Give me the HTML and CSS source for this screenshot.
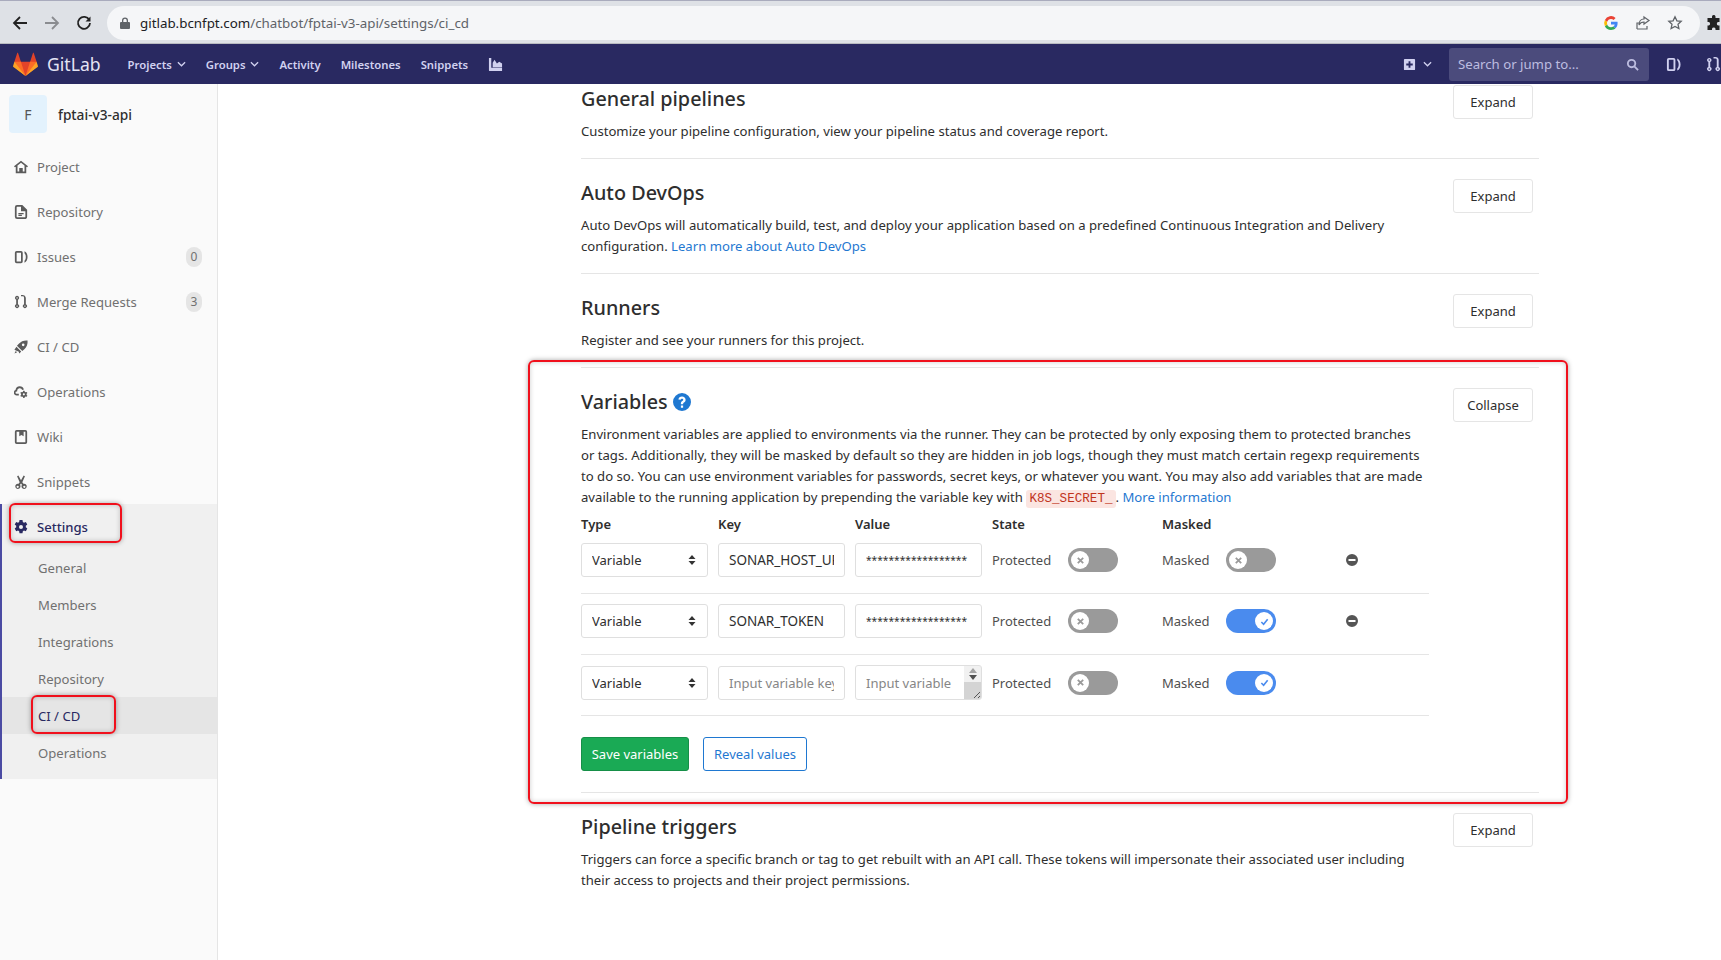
FILE: index.html
```html
<!DOCTYPE html>
<html lang="en">
<head>
    <meta charset="UTF-8">
    <title>CI / CD Settings · fptai-v3-api · GitLab</title>
    <link rel="stylesheet" href="styles.css">
</head>
<body>
    <svg class="sprite" width="0" height="0">
        <symbol id="i-home" viewBox="0 0 16 16"><path d="M8 .8 0 7.100l1 1.300 1-.8V15h12V7.600l1 .8 1-1.300zM4 13V6.200l4-3.100 4 3.100V13h-2V9H6v4z" fill-rule="evenodd"/></symbol>
        <symbol id="i-doc" viewBox="0 0 16 16"><path d="M3.500 0h6L15 5.500V13a3 3 0 0 1-3 3H3.500a2.500 2.500 0 0 1-2.500-2.500v-11A2.500 2.500 0 0 1 3.500 0zm0 2a.5.500 0 0 0-.5.500v11a.5.500 0 0 0 .5.500H12a1 1 0 0 0 1-1V7H8V2zM5 9h6v1.500H5zm0 2.200h4V12.500H5z" fill-rule="evenodd"/></symbol>
        <symbol id="i-issues" viewBox="0 0 16 16"><path d="M3 1h5a2 2 0 0 1 2 2v10a2 2 0 0 1-2 2H3a2 2 0 0 1-2-2V3a2 2 0 0 1 2-2zm0 2v10h5V3zm9-1.500c2.300 1 3.500 3.500 3.500 6.500s-1.200 5.500-3.500 6.500v-2.200c1-.9 1.500-2.400 1.500-4.300s-.5-3.400-1.500-4.300z" fill-rule="evenodd"/></symbol>
        <symbol id="i-mr" viewBox="0 0 16 16"><path d="M3.500 1a2.300 2.300 0 0 1 1 4.400v5.200a2.300 2.300 0 1 1-2 0V5.400a2.300 2.300 0 0 1 1-4.400zm0 1.500a.8.800 0 1 0 0 1.600.8.800 0 0 0 0-1.600zm0 9.400a.8.800 0 1 0 0 1.600.8.800 0 0 0 0-1.600zM8 0v1.500h2A1.500 1.500 0 0 1 11.500 3v7.600a2.300 2.300 0 1 0 2 0V3A3.500 3.500 0 0 0 10 0zm4.500 11.900a.8.800 0 1 1 0 1.600.8.800 0 0 1 0-1.600z" fill-rule="evenodd"/></symbol>
        <symbol id="i-rocket" viewBox="0 0 16 16"><path d="M15.500.5c.4 4.200-1 7.500-3.700 10l-2.300 2.100L3.400 6.500l2.100-2.300C8 1.500 11.300.1 15.500.5zM10.500 4a1.500 1.500 0 1 0 0 3 1.500 1.500 0 0 0 0-3zM2.800 7.800l5.400 5.400-2 2.300-1-2.300-2.400-1-2.300-1zM2 12.500 3.500 14 .5 15.500z" fill-rule="evenodd"/></symbol>
        <symbol id="i-ops" viewBox="0 0 16 16"><path d="M6.500 1.500a5 5 0 0 1 4.800 3.500l-1.900.6A3 3 0 0 0 3.600 6.500v1H3a1.300 1.300 0 0 0 0 2.600h2.500v2H3a3.300 3.300 0 0 1-1.300-6.300A5 5 0 0 1 6.500 1.500z"/><path d="M10.500 6.500h1.500l.3 1.200 1 .6 1.200-.4.800 1.300-.9.900v1.200l.9.900-.8 1.300-1.200-.4-1 .6-.3 1.200h-1.500l-.3-1.200-1-.6-1.200.4-.8-1.300.9-.9V10.100l-.9-.9.8-1.300 1.200.4 1-.6zm.75 3a1.200 1.200 0 1 0 0 2.400 1.200 1.200 0 0 0 0-2.400z" fill-rule="evenodd"/></symbol>
        <symbol id="i-book" viewBox="0 0 16 16"><path d="M3 0h10a2 2 0 0 1 2 2v12a2 2 0 0 1-2 2H3a2 2 0 0 1-2-2V2a2 2 0 0 1 2-2zm0 2v12h10V2h-2v5L8.500 5.800 6 7V2z" fill-rule="evenodd"/></symbol>
        <symbol id="i-scissors" viewBox="0 0 16 16"><path d="M5 .5 8 6l3-5.500 1.500 1-3 6.800 1.300 1.700a3 3 0 1 1-1.700 1.200L8 9.800l-1.100 1.400a3 3 0 1 1-1.700-1.200l1.300-1.700-3-6.800zM4.200 12.200a1.300 1.300 0 1 0 0 2.600 1.300 1.300 0 0 0 0-2.600zm7.600 0a1.300 1.300 0 1 0 0 2.600 1.300 1.300 0 0 0 0-2.600z" fill-rule="evenodd"/></symbol>
        <symbol id="i-gear" viewBox="0 0 16 16"><path d="M9.700 0l.4 2.200 1.300.8 2.100-.8 1.700 3-1.700 1.400v1.800l1.700 1.400-1.700 3-2.100-.8-1.300.8-.4 2.200H6.300l-.4-2.200-1.300-.8-2.100.8-1.700-3 1.700-1.400V6.600L.8 5.200l1.700-3 2.100.8 1.300-.8L6.300 0zM8 5.700a1.800 1.800 0 1 0 0 4.600 1.800 1.800 0 0 0 0-4.600z" fill-rule="evenodd"/></symbol>
        <symbol id="i-chart" viewBox="0 0 16 16"><path d="M1 1h2.500v10.500H15V15H2a1 1 0 0 1-1-1zm4 5 2-3 2.500 4 2.500-2 3 2v4H5z"/></symbol>
        <symbol id="i-chevron" viewBox="0 0 10 6"><path d="M1 1l4 4 4-4" fill="none" stroke="currentColor" stroke-width="1.400"/></symbol>
        <symbol id="i-minus" viewBox="0 0 14 14"><path d="M7 1a6 6 0 1 1 0 12A6 6 0 0 1 7 1zM3.500 6v2h7V6z" fill-rule="evenodd"/></symbol>
        <symbol id="i-x" viewBox="0 0 10 10"><path d="M2 2l6 6M8 2 2 8" fill="none" stroke="currentColor" stroke-width="2"/></symbol>
        <symbol id="i-check" viewBox="0 0 10 10"><path d="M1.500 5.500 4 8l4.500-5.500" fill="none" stroke="currentColor" stroke-width="1.800"/></symbol>
    </svg>

    <div class="browser-bar">
        <svg class="browser-icon" viewBox="0 0 16 16"><path d="M15 8H2M8 2 2 8l6 6" fill="none" stroke="#222" stroke-width="1.800"/></svg>
        <svg class="browser-icon" viewBox="0 0 16 16"><path d="M1 8h13M8 2l6 6-6 6" fill="none" stroke="#8a8c90" stroke-width="1.800"/></svg>
        <svg class="browser-icon" viewBox="0 0 16 16"><path d="M13.300 5A6 6 0 1 0 14 8" fill="none" stroke="#222" stroke-width="1.800"/><path d="M14.500 1.500v5h-5z" fill="#222"/></svg>
        <div class="url-pill">
            <svg class="lock" viewBox="0 0 10 12"><path d="M2 5V3.500a3 3 0 0 1 6 0V5h1a1 1 0 0 1 1 1v5a1 1 0 0 1-1 1H1a1 1 0 0 1-1-1V6a1 1 0 0 1 1-1zm1.300 0h3.400V3.500a1.700 1.700 0 0 0-3.400 0z" fill="#5f6368" fill-rule="evenodd"/></svg>
            <span class="url"><span class="url-host">gitlab.bcnfpt.com</span>/chatbot/fptai-v3-api/settings/ci_cd</span>
            <svg class="pill-icon" viewBox="0 0 16 16">
                <path d="M14.600 8.200c0-.5 0-1-.1-1.400H8v2.700h3.700a3.200 3.200 0 0 1-1.400 2.100l2.200 1.700c1.300-1.200 2.100-3 2.100-5.100z" fill="#4285f4"/>
                <path d="M8 15c1.900 0 3.500-.6 4.500-1.700l-2.200-1.700c-.6.400-1.400.7-2.300.7a4 4 0 0 1-3.800-2.800L1.900 11.200A6.800 6.800 0 0 0 8 15z" fill="#34a853"/>
                <path d="M4.200 9.500a4 4 0 0 1 0-2.700L1.900 5a6.800 6.800 0 0 0 0 6.200z" fill="#fbbc05"/>
                <path d="M8 3.900c1 0 1.900.4 2.600 1l2-2A6.800 6.800 0 0 0 1.900 5l2.300 1.800A4 4 0 0 1 8 3.900z" fill="#ea4335"/>
            </svg>
            <svg class="pill-icon" viewBox="0 0 16 16"><path d="M2 14V8h2M2 14h10v-3M9 2l5 3.500L9 9V7C6.500 7 5 8 4 10c0-3.500 2-6 5-6z" fill="none" stroke="#5f6368" stroke-width="1.200"/></svg>
            <svg class="pill-icon" viewBox="0 0 16 16"><path d="M8 1.800l1.900 4 4.300.5-3.200 3 .9 4.300L8 11.500l-3.900 2.100.9-4.300-3.200-3 4.300-.5z" fill="none" stroke="#5f6368" stroke-width="1.300"/></svg>
        </div>
        <svg class="browser-icon puzzle" viewBox="0 0 16 16"><path d="M6 1.500a1.800 1.800 0 0 1 3.500 0V3h4v4h-1.300a1.800 1.800 0 0 0 0 3.500H13.500V15h-4v-1.200a1.800 1.800 0 0 0-3.500 0V15H1.500v-4.500h1.200a1.800 1.800 0 0 0 0-3.500H1.500V3H6z" fill="#222"/></svg>
    </div>

    <nav class="navbar">
        <a class="brand">
            <svg class="tanuki" viewBox="0 0 36 36">
                <path d="M2 14l9.380 9v-9l-4-12.280c-.205-.632-1.176-.632-1.380 0z" fill="#e24329"/>
                <path d="M34 14l-9.380 9v-9l4-12.280c.205-.632 1.176-.632 1.380 0z" fill="#e24329"/>
                <path d="M18 34.380 3 14h30z" fill="#e24329"/>
                <path d="M18 34.380 11.380 14H2l4 11z" fill="#fc6d26"/>
                <path d="M18 34.380 24.620 14H34l-4 11z" fill="#fc6d26"/>
                <path d="M2 14 .1 20.160c-.18.565 0 1.200.5 1.560l17.420 12.660z" fill="#fca326"/>
                <path d="M34 14l1.900 6.160c.18.565 0 1.200-.5 1.560L18 34.380z" fill="#fca326"/>
            </svg>
            <span class="brand-name">GitLab</span>
        </a>
        <a class="nav-link">Projects <svg class="chevron"><use href="#i-chevron"/></svg></a>
        <a class="nav-link">Groups <svg class="chevron"><use href="#i-chevron"/></svg></a>
        <a class="nav-link">Activity</a>
        <a class="nav-link">Milestones</a>
        <a class="nav-link">Snippets</a>
        <svg class="nav-icon"><use href="#i-chart"/></svg>
        <div class="nav-right">
            <div class="new-menu">
                <svg class="nav-plus" viewBox="0 0 14 14"><path d="M2 1h10a1 1 0 0 1 1 1v10a1 1 0 0 1-1 1H2a1 1 0 0 1-1-1V2a1 1 0 0 1 1-1zm4 2.500V6H3.500v2H6v2.500h2V8h2.500V6H8V3.500z" fill="currentColor" fill-rule="evenodd"/></svg>
                <svg class="chevron"><use href="#i-chevron"/></svg>
            </div>
            <div class="search">
                <span>Search or jump to...</span>
                <svg viewBox="0 0 14 14"><circle cx="6" cy="6" r="4" fill="none" stroke="currentColor" stroke-width="2"/><path d="M9 9l4 4" stroke="currentColor" stroke-width="2"/></svg>
            </div>
            <svg class="nav-icon"><use href="#i-issues"/></svg>
            <svg class="nav-icon"><use href="#i-mr"/></svg>
        </div>
    </nav>

    <div class="layout">
        <aside class="sidebar">
            <div class="project-head">
                <div class="avatar">F</div>
                <span class="project-name">fptai-v3-api</span>
            </div>
            <a class="side-item"><svg><use href="#i-home"/></svg>Project</a>
            <a class="side-item"><svg><use href="#i-doc"/></svg>Repository</a>
            <a class="side-item"><svg><use href="#i-issues"/></svg>Issues<span class="badge">0</span></a>
            <a class="side-item"><svg><use href="#i-mr"/></svg>Merge Requests<span class="badge">3</span></a>
            <a class="side-item"><svg><use href="#i-rocket"/></svg>CI / CD</a>
            <a class="side-item"><svg><use href="#i-ops"/></svg>Operations</a>
            <a class="side-item"><svg><use href="#i-book"/></svg>Wiki</a>
            <a class="side-item"><svg><use href="#i-scissors"/></svg>Snippets</a>
            <div class="side-active">
                <a class="side-item current"><svg><use href="#i-gear"/></svg>Settings<span class="callout callout-settings"></span></a>
                <a class="sub-item">General</a>
                <a class="sub-item">Members</a>
                <a class="sub-item">Integrations</a>
                <a class="sub-item">Repository</a>
                <a class="sub-item current">CI / CD<span class="callout callout-cicd"></span></a>
                <a class="sub-item">Operations</a>
            </div>
        </aside>

        <main class="content">
            <section class="block first">
                <div class="block-text">
                    <h2>General pipelines</h2>
                    <p>Customize your pipeline configuration, view your pipeline status and coverage report.</p>
                </div>
                <button class="btn">Expand</button>
            </section>

            <section class="block">
                <div class="block-text">
                    <h2>Auto DevOps</h2>
                    <p>Auto DevOps will automatically build, test, and deploy your application based on a predefined Continuous Integration and Delivery configuration. <a class="link">Learn more about Auto DevOps</a></p>
                </div>
                <button class="btn">Expand</button>
            </section>

            <section class="block">
                <div class="block-text">
                    <h2>Runners</h2>
                    <p>Register and see your runners for this project.</p>
                </div>
                <button class="btn">Expand</button>
            </section>

            <section class="block variables">
                <span class="callout callout-main"></span>
                <div class="block-text">
                    <h2>Variables
                        <svg class="help" viewBox="0 0 16 16"><path d="M8 0a8 8 0 1 1 0 16A8 8 0 0 1 8 0zM7 11v2h2v-2zM8 3C6.200 3 5 4 4.800 5.700l2 .3C6.900 5.300 7.300 5 8 5s1.100.4 1.100.9c0 .5-.3.8-.9 1.200C7.400 7.700 7 8.300 7 9.500V10h2v-.3c0-.6.200-.9.800-1.300.9-.6 1.400-1.300 1.400-2.500C11.200 4.200 9.900 3 8 3z" fill="#1f78d1" fill-rule="evenodd"/></svg>
                    </h2>
                    <p>Environment variables are applied to environments via the runner. They can be protected by only exposing them to protected branches<br>or tags. Additionally, they will be masked by default so they are hidden in job logs, though they must match certain regexp requirements<br>to do so. You can use environment variables for passwords, secret keys, or whatever you want. You may also add variables that are made<br>available to the running application by prepending the variable key with <code>K8S_SECRET_</code>. <a class="link">More information</a></p>
                </div>
                <button class="btn">Collapse</button>

                <div class="var-list">
                    <div class="var-head">
                        <span>Type</span><span>Key</span><span>Value</span><span>State</span><span>Masked</span>
                    </div>

                    <div class="var-row">
                        <select class="field"><option>Variable</option></select>
                        <input class="field text" value="SONAR_HOST_URL">
                        <input class="field secret" value="******************">
                        <div class="toggle-cell"><span class="toggle-label state">Protected</span><span class="toggle"><i><svg><use href="#i-x"/></svg></i></span></div>
                        <div class="toggle-cell"><span class="toggle-label">Masked</span><span class="toggle"><i><svg><use href="#i-x"/></svg></i></span></div>
                        <svg class="remove"><use href="#i-minus"/></svg>
                    </div>

                    <div class="var-row">
                        <select class="field"><option>Variable</option></select>
                        <input class="field text" value="SONAR_TOKEN">
                        <input class="field secret" value="******************">
                        <div class="toggle-cell"><span class="toggle-label state">Protected</span><span class="toggle"><i><svg><use href="#i-x"/></svg></i></span></div>
                        <div class="toggle-cell"><span class="toggle-label">Masked</span><span class="toggle on"><i><svg><use href="#i-check"/></svg></i></span></div>
                        <svg class="remove"><use href="#i-minus"/></svg>
                    </div>

                    <div class="var-row">
                        <select class="field"><option>Variable</option></select>
                        <input class="field text" placeholder="Input variable key">
                        <div class="fake-textarea">
                            <span>Input variable</span>
                            <div class="fake-scroll">
                                <div class="fake-arrows"><b class="up"></b><b class="down"></b></div>
                                <div class="fake-grip"><svg viewBox="0 0 10 10"><path d="M9 3 3 9M9 7 7 9" stroke="#555" fill="none"/></svg></div>
                            </div>
                        </div>
                        <div class="toggle-cell"><span class="toggle-label state">Protected</span><span class="toggle"><i><svg><use href="#i-x"/></svg></i></span></div>
                        <div class="toggle-cell"><span class="toggle-label">Masked</span><span class="toggle on"><i><svg><use href="#i-check"/></svg></i></span></div>
                    </div>
                </div>

                <div class="var-actions">
                    <button class="btn-save">Save variables</button>
                    <button class="btn-reveal">Reveal values</button>
                </div>
            </section>

            <section class="block">
                <div class="block-text">
                    <h2>Pipeline triggers</h2>
                    <p>Triggers can force a specific branch or tag to get rebuilt with an API call. These tokens will impersonate their associated user including their access to projects and their project permissions.</p>
                </div>
                <button class="btn">Expand</button>
            </section>
        </main>
    </div>
</body>
</html>
```

FILE: styles.css
```css
* {
    box-sizing: border-box;
}

html, body {
    height: 100%;
}

body {
    margin: 0;
    overflow: hidden;
    font-family: "Noto Sans", "Open Sans", Arial, sans-serif;
    font-size: 13px;
    color: #2e2e2e;
    background: #fff;
}

.sprite {
    display: block;
    position: absolute;
}

svg {
    fill: currentColor;
}

/* browser chrome */
.browser-bar {
    height: 44px;
    display: flex;
    align-items: center;
    padding: 1px 0 0 12px;
    background: #dee1e6;
    border-top: 1px solid #a9abbd;
    border-bottom: 1px solid #b9bbc1;
    overflow: hidden;
}

.browser-icon {
    width: 16px;
    height: 16px;
    margin-right: 16px;
    flex: none;
}

.url-pill {
    width: 1593px;
    height: 34px;
    margin-left: -1px;
    margin-right: 6px;
    flex: none;
    display: flex;
    align-items: center;
    padding: 0 17px 0 13px;
    border-radius: 17px;
    background: #f5f6f8;
}

.lock {
    width: 10px;
    height: 12px;
    margin-right: 10px;
}

.url {
    flex: 1;
    font-size: 13.350px;
    color: #5f6368;
}

.url-host {
    color: #202124;
}

.pill-icon {
    width: 16px;
    height: 16px;
    margin-left: 16px;
}

.puzzle {
    margin: 0;
}

/* top navigation */
.navbar {
    height: 40px;
    display: flex;
    align-items: center;
    padding-left: 13px;
    background: #292961;
    color: #d1d1f0;
}

.brand {
    display: flex;
    align-items: center;
    margin-right: 27px;
    color: #fff;
}

.tanuki {
    width: 25px;
    height: 25px;
    margin-right: 9px;
}

.brand-name {
    font-size: 17.600px;
    color: #e4e4f4;
}

.nav-link {
    display: flex;
    align-items: center;
    margin-right: 20px;
    font-size: 11.300px;
    font-weight: 600;
    white-space: pre;
}

.chevron {
    width: 9px;
    height: 6px;
    margin-left: 2px;
}

.nav-icon {
    width: 15px;
    height: 15px;
    flex: none;
}

.nav-right {
    margin-left: auto;
    display: flex;
    align-items: center;
    overflow: hidden;
}

.new-menu {
    display: flex;
    align-items: center;
    gap: 5px;
    margin-right: 17px;
}

.nav-plus {
    width: 13px;
    height: 13px;
}

.search {
    width: 200px;
    height: 33px;
    margin-right: 17px;
    display: flex;
    align-items: center;
    justify-content: space-between;
    padding: 0 10px 0 9px;
    border-radius: 3px;
    background: #4b4b7c;
    color: #bdbde0;
    font-size: 13.200px;
}

.search svg {
    width: 13px;
    height: 13px;
}

.nav-right .nav-icon:last-child {
    margin: 0 0 0 25px;
}

/* page layout */
.layout {
    height: 876px;
    display: flex;
}

.sidebar {
    width: 218px;
    flex: none;
    background: #fafafa;
    border-right: 1px solid #e5e5e5;
    color: #707070;
}

.project-head {
    height: 60px;
    display: flex;
    align-items: center;
    padding: 0 8px 0 9px;
}

.avatar {
    width: 38px;
    height: 38px;
    display: flex;
    align-items: center;
    justify-content: center;
    border-radius: 4px;
    background: #e3f2fd;
    color: #555;
    font-size: 14px;
}

.project-name {
    margin-left: 11px;
    font-size: 13.700px;
    font-weight: 500;
    color: #2e2e2e;
}

.side-item {
    position: relative;
    height: 45px;
    display: flex;
    align-items: center;
    padding: 0 15px 0 14px;
    font-size: 13.100px;
}

.side-item svg {
    width: 14px;
    height: 14px;
    margin-right: 9px;
    color: #5b5b5b;
}

.badge {
    margin-left: auto;
    width: 16px;
    height: 20px;
    border-radius: 8px;
    background: #e5e5e5;
    font-size: 12px;
    line-height: 20px;
    text-align: center;
}

.side-active {
    height: 275px;
    background: #f0f0f0;
    border-left: 2px solid #4b4ba3;
}

.side-active .side-item {
    padding-left: 12px;
}

.side-item.current {
    font-weight: 500;
    color: #292961;
}

.side-item.current svg {
    color: #292961;
}

.sub-item {
    position: relative;
    height: 37px;
    display: flex;
    align-items: center;
    padding-left: 36px;
    font-size: 13.100px;
}

.sub-item.current {
    background: #e5e5e5;
    color: #292961;
}

/* red annotation boxes from the screenshot */
.callout {
    position: absolute;
    border: 2px solid #f0101c;
    border-radius: 6px;
    box-shadow: 0 0 5px rgba(0, 0, 0, 0.35), inset 0 0 5px rgba(0, 0, 0, 0.2);
    pointer-events: none;
}

.callout-settings {
    top: -1px;
    left: 7px;
    width: 113px;
    height: 40px;
}

.callout-cicd {
    top: -2px;
    left: 29px;
    width: 85px;
    height: 39px;
}

.callout-main {
    top: -8px;
    bottom: -12px;
    left: -53px;
    right: -29px;
}

/* settings blocks */
.content {
    width: 958px;
    margin-left: 363px;
}

.block {
    position: relative;
    display: flex;
    flex-wrap: wrap;
    align-items: flex-start;
    justify-content: space-between;
    padding-top: 20px;
    padding-bottom: 16px;
    padding-right: 6px;
    border-bottom: 1px solid #e5e5e5;
}

.block:last-child {
    border-bottom: none;
}

.block.first {
    padding-top: 1px;
}

.block-text {
    width: 850px;
}

.block h2 {
    margin: 0;
    height: 28px;
    display: flex;
    align-items: center;
    gap: 5px;
    font-size: 19.800px;
    font-weight: 500;
    line-height: 28px;
    color: #2e2e2e;
}

.block p {
    margin: 8px 0 0;
    font-size: 13.140px;
    line-height: 21px;
}

.help {
    width: 18px;
    height: 18px;
}

.link {
    color: #1f78d1;
}

code {
    padding: 2px 3px;
    border-radius: 3px;
    background: #fbe5e1;
    color: #c0341d;
    font-family: "Liberation Mono", monospace;
    font-size: 12.600px;
}

.btn {
    width: 80px;
    height: 34px;
    padding: 0;
    border: 1px solid #e5e5e5;
    border-radius: 3px;
    background: #fff;
    color: #2e2e2e;
    font: inherit;
    font-size: 13px;
}

/* variables table */
.variables {
    padding-bottom: 21px;
}

.var-list {
    width: 100%;
}

.var-head,
.var-row {
    display: grid;
    grid-template-columns: 127px 127px 127px 160px 173px 14px;
    gap: 10px;
    align-items: center;
}

.var-head {
    height: 28px;
    font-weight: 600;
    font-size: 13px;
}

.var-row {
    width: 848px;
    height: 61px;
    padding: 10px 0 16px;
    border-bottom: 1px solid #e5e5e5;
}

.var-head + .var-row {
    height: 56px;
    padding-top: 5px;
}

.field {
    width: 100%;
    height: 34px;
    padding: 0 10px;
    border: 1px solid #dfdfdf;
    border-radius: 3px;
    background: #fff;
    color: #2e2e2e;
    font: inherit;
    font-size: 13px;
    text-overflow: clip;
}

.text {
    font-size: 13.500px;
}

select.field {
    appearance: none;
    background-image: url("data:image/svg+xml,%3Csvg xmlns='http://www.w3.org/2000/svg' width='8' height='12'%3E%3Cpath d='M4 1l3.500 4h-7zM4 11 .5 7h7z' fill='%23333'/%3E%3C/svg%3E");
    background-repeat: no-repeat;
    background-position: right 11px center;
}

.field::placeholder,
.fake-textarea {
    color: #868686;
}

.field::placeholder {
    font-size: 13px;
}

.secret {
    font-size: 10.200px;
}

.fake-textarea {
    height: 35px;
    display: flex;
    justify-content: space-between;
    align-items: center;
    padding-left: 10px;
    border: 1px solid #dfdfdf;
    border-radius: 3px;
    overflow: hidden;
}

.fake-scroll {
    width: 17px;
    height: 100%;
    display: flex;
    flex-direction: column;
    background: #d4d4d4;
}

.fake-arrows {
    height: 16px;
    display: flex;
    flex-direction: column;
    align-items: center;
    justify-content: center;
    gap: 2px;
    background: #f1f1f1;
}

.fake-arrows b {
    border-left: 4px solid transparent;
    border-right: 4px solid transparent;
}

.fake-arrows .up {
    border-bottom: 5px solid #a3a3a3;
}

.fake-arrows .down {
    border-top: 5px solid #505050;
}

.fake-grip {
    flex: 1;
    display: flex;
    align-items: flex-end;
    justify-content: flex-end;
}

.fake-grip svg {
    width: 10px;
    height: 10px;
}

.toggle-cell {
    display: flex;
    align-items: center;
    color: #4f4f4f;
}

.toggle-label {
    width: 64px;
}

.toggle-label.state {
    width: 76px;
}

.toggle {
    width: 50px;
    height: 24px;
    display: flex;
    align-items: center;
    padding: 0 3px;
    border-radius: 12px;
    background: #9a9a9a;
}

.toggle i {
    width: 18px;
    height: 18px;
    display: flex;
    align-items: center;
    justify-content: center;
    border-radius: 50%;
    background: #fff;
    color: #9a9a9a;
}

.toggle svg {
    width: 9px;
    height: 9px;
}

.toggle.on {
    justify-content: flex-end;
    background: #4a8bee;
}

.toggle.on i {
    color: #4a8bee;
}

.remove {
    width: 14px;
    height: 14px;
    color: #555;
}

.var-actions {
    width: 100%;
    display: flex;
    gap: 14px;
    margin-top: 21px;
}

.btn-save,
.btn-reveal {
    height: 34px;
    padding: 0;
    border-radius: 3px;
    font: inherit;
    font-size: 13px;
}

.btn-save {
    width: 108px;
    border: 1px solid #168f48;
    background: #1aaa55;
    color: #fff;
}

.btn-reveal {
    width: 104px;
    border: 1px solid #1f78d1;
    background: #fff;
    color: #1f78d1;
}
```
